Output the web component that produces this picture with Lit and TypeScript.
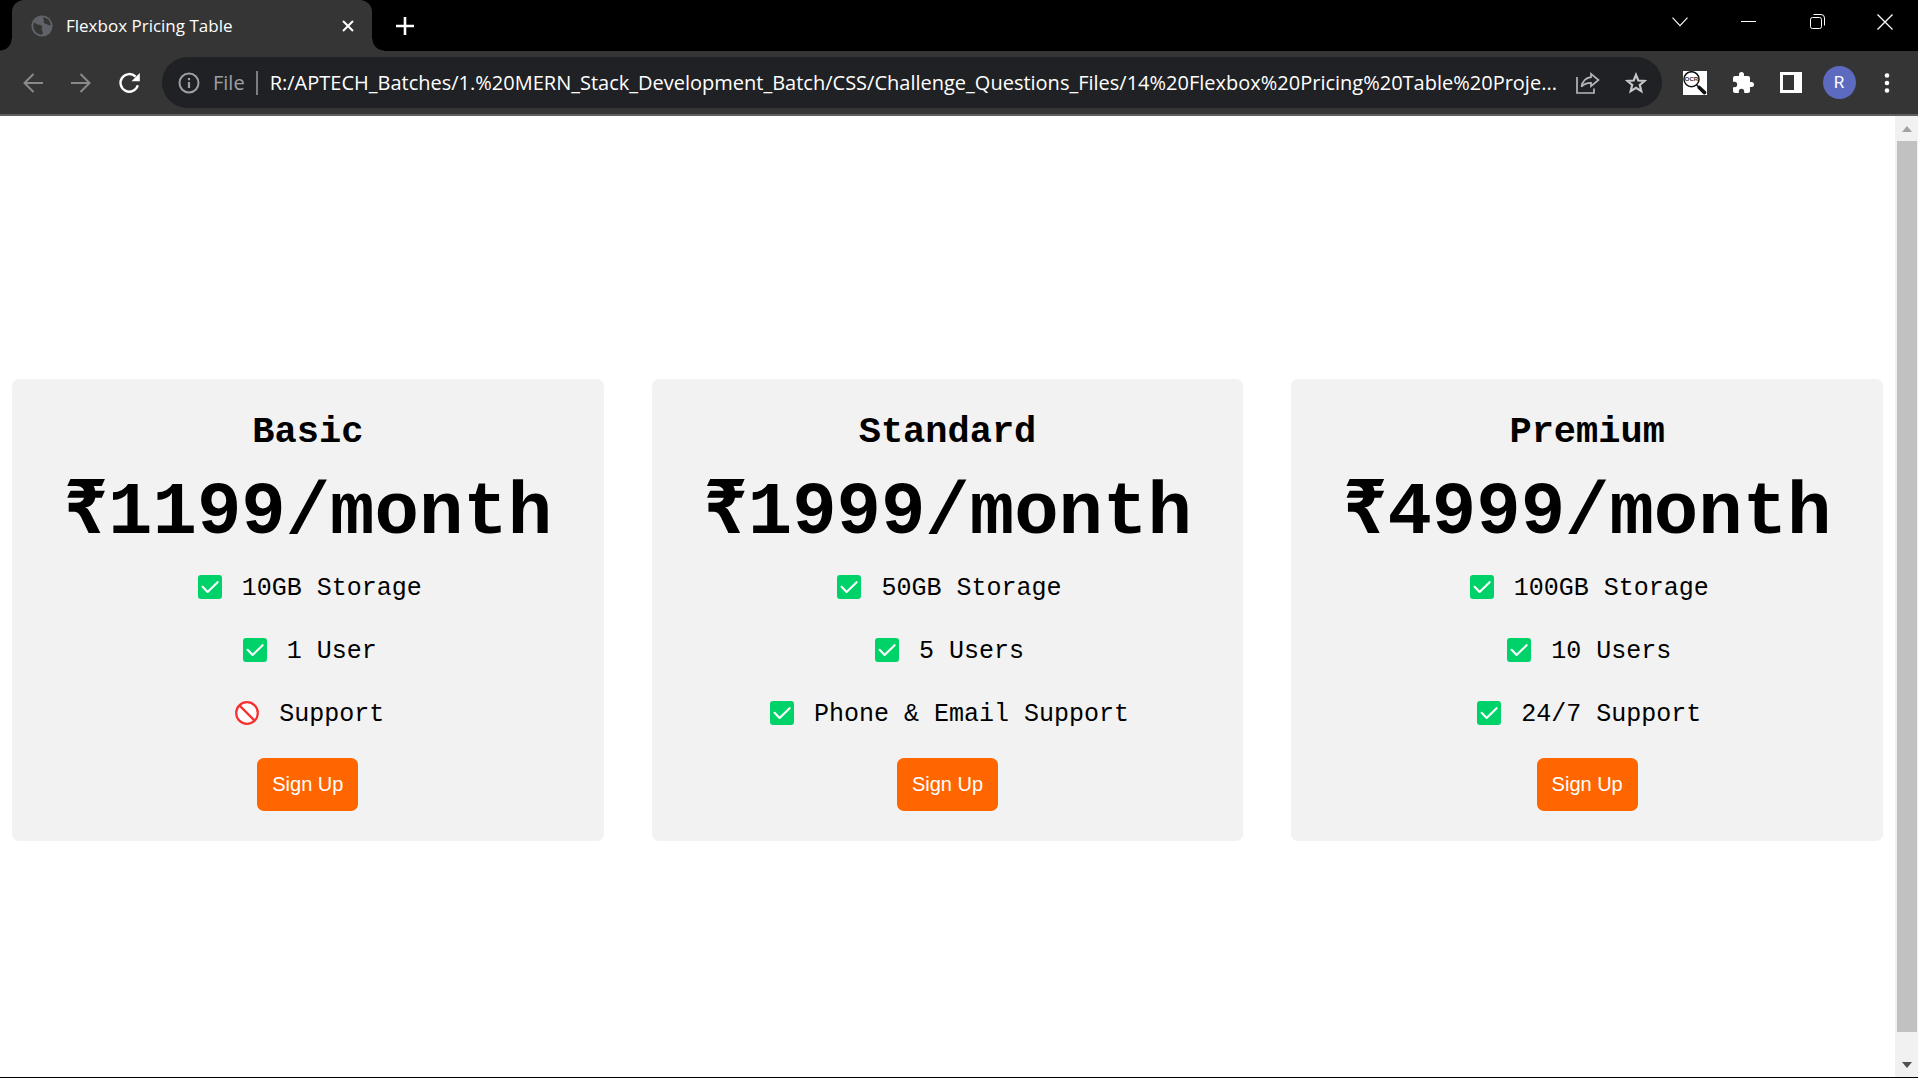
import { LitElement, html, css, svg } from "lit";
import { customElement, property } from "lit/decorators.js";

interface Feature {
  label: string;
  included: boolean;
}

interface Plan {
  name: string;
  price: string;
  features: Feature[];
}

const plans: Plan[] = [
  {
    name: "Basic",
    price: "₹1199/month",
    features: [
      { label: "10GB Storage", included: true },
      { label: "1 User", included: true },
      { label: "Support", included: false },
    ],
  },
  {
    name: "Standard",
    price: "₹1999/month",
    features: [
      { label: "50GB Storage", included: true },
      { label: "5 Users", included: true },
      { label: "Phone & Email Support", included: true },
    ],
  },
  {
    name: "Premium",
    price: "₹4999/month",
    features: [
      { label: "100GB Storage", included: true },
      { label: "10 Users", included: true },
      { label: "24/7 Support", included: true },
    ],
  },
];

const icon = (size: number, body: unknown) => html`<svg
  class="mark"
  width=${size}
  height=${size}
  viewBox="0 0 24 24"
  fill="none"
  aria-hidden="true"
>
  ${body}
</svg>`;

const checkIcon = icon(
  24,
  svg`<rect width="24" height="24" rx="3" fill="#00d26a"/>
  <path d="M4.6 11.8 9.6 17 19.6 7.2" stroke="#fff" stroke-width="2.1" stroke-linecap="round" stroke-linejoin="round"/>`,
);

const blockedIcon = icon(
  24,
  svg`<circle cx="12" cy="12" r="10.8" fill="#fff" stroke="#f8312f" stroke-width="2.2"/>
  <path d="M4.4 4.4 19.6 19.6" stroke="#f8312f" stroke-width="2.2"/>`,
);

@customElement("plan-card")
export class PlanCard extends LitElement {
  @property({ attribute: false }) plan!: Plan;

  static styles = css`
    :host {
      display: flex;
      flex: 1 1 0;
      min-width: 0;
    }
    .card {
      flex: 1;
      min-width: 0;
      display: flex;
      flex-direction: column;
      align-items: center;
      padding: 30px;
      border-radius: 7px;
      background: #f2f2f2;
      color: #000;
      font-family: "Liberation Mono", "DejaVu Sans Mono", monospace;
      box-sizing: border-box;
    }
    .name {
      margin: 0 0 12px;
      font-size: 37px;
      line-height: 46px;
      font-weight: 700;
    }
    .price {
      margin: 0 0 15px;
      font-size: 74px;
      line-height: 92px;
      font-weight: 700;
      white-space: nowrap;
    }
    .features {
      list-style: none;
      display: flex;
      flex-direction: column;
      align-items: center;
      gap: 33px;
      margin: 0 0 28px;
      padding: 0;
    }
    .feature {
      display: flex;
      align-items: center;
      gap: 20px;
      padding-left: 4px;
      font-size: 25px;
      line-height: 30px;
    }
    .mark {
      display: block;
      flex: none;
      margin-bottom: 4px;
    }
    .signup {
      height: 53px;
      padding: 0 15px;
      border: 0;
      border-radius: 7px;
      background: #ff6600;
      color: #fff;
      font-family: "Liberation Sans", Arial, sans-serif;
      font-size: 20px;
      cursor: pointer;
    }
  `;

  render() {
    return html`<article class="card">
      <h2 class="name">${this.plan.name}</h2>
      <p class="price">${this.plan.price}</p>
      <ul class="features">
        ${this.plan.features.map(
          (f) =>
            html`<li class="feature">${f.included ? checkIcon : blockedIcon}<span>${f.label}</span></li>`,
        )}
      </ul>
      <button class="signup" type="button">Sign Up</button>
    </article>`;
  }
}

@customElement("browser-chrome")
export class BrowserChrome extends LitElement {
  static styles = css`
    :host {
      display: block;
      font-family: "Open Sans", "Noto Sans", sans-serif;
    }
    button {
      display: flex;
      align-items: center;
      justify-content: center;
      padding: 0;
      border: 0;
      background: none;
      color: #fff;
      cursor: pointer;
      flex: none;
    }
    svg {
      display: block;
      flex: none;
    }
    .strip {
      display: flex;
      height: 51px;
      background: #000;
      padding-left: 12px;
    }
    .tab {
      position: relative;
      display: flex;
      align-items: center;
      width: 360px;
      box-sizing: border-box;
      padding: 0 14px 0 19px;
      border-radius: 12px 12px 0 0;
      background: #353535;
      color: #fff;
    }
    .tab::before,
    .tab::after {
      content: "";
      position: absolute;
      bottom: 0;
      width: 12px;
      height: 12px;
    }
    .tab::before {
      left: -12px;
      background: radial-gradient(circle at 0 0, #000 11px, #353535 12px);
    }
    .tab::after {
      right: -12px;
      background: radial-gradient(circle at 100% 0, #000 11px, #353535 12px);
    }
    .title {
      flex: 1;
      margin-left: 13px;
      font-size: 17px;
      line-height: 24px;
    }
    .close {
      width: 20px;
      height: 20px;
    }
    .add {
      width: 40px;
      margin-left: 13px;
    }
    .window {
      display: flex;
      margin-left: auto;
      height: 43px;
    }
    .window button {
      width: 69px;
    }
    .window .exit {
      width: 66px;
    }
    .toolbar {
      display: flex;
      align-items: center;
      height: 63px;
      padding: 0 7px 0 9px;
      background: #353535;
      border-bottom: 2px solid #5f5f5f;
    }
    .nav {
      width: 48px;
      height: 48px;
    }
    .omnibox {
      flex: 1;
      min-width: 0;
      display: flex;
      align-items: center;
      height: 51px;
      margin-left: 9px;
      margin-right: 9px;
      padding: 0 2px 0 16px;
      border-radius: 26px;
      background: #202124;
      box-sizing: border-box;
    }
    .scheme {
      margin-left: 13px;
      color: #9aa0a6;
      font-size: 20px;
      line-height: 28px;
    }
    .divider {
      width: 2px;
      height: 24px;
      margin: 0 12px 0 11px;
      background: #7b7e82;
      flex: none;
    }
    .url {
      flex: 1;
      min-width: 0;
      height: 32px;
      padding: 0;
      border: 0;
      outline: 0;
      background: none;
      color: #fff;
      font-family: inherit;
      font-size: 20px;
    }
    .tool {
      width: 48px;
      height: 48px;
    }
    .avatar {
      width: 33px;
      height: 33px;
      border-radius: 50%;
      background: #5c6bc0;
      font-family: Roboto, sans-serif;
      font-size: 17px;
      line-height: 33px;
    }
    .ocr {
      font-family: "Liberation Sans", sans-serif;
      font-size: 6px;
      font-weight: 700;
    }
  `;

  render() {
    return html`
      <div class="strip">
        <div class="tab">
          <svg width="22" height="22" viewBox="0 0 22 22" aria-hidden="true">
            <circle cx="11" cy="11" r="10.6" fill="#5f6368" />
            <path
              d="M3 7.4C4.600 7.600 5.200 9 6.800 9.600c1.600.6 3.400.4 4.200 1.700.7 1.200-.6 2.200-.4 3.500.2 1.100 1.500 1.500 1.300 2.900-.1.900-.7 1.500-1.300 2A8.900 8.900 0 0 1 3 7.400Z"
              fill="#353535"
            />
            <path
              d="M12.600 2.300A8.900 8.900 0 0 1 19.700 10c-1.300.5-2.300.1-3.200-.6-1.100-.9-2.700-.5-3.500-1.400-.7-.9.200-1.800-.2-2.800-.3-.9-1-1.700-.2-2.900Z"
              fill="#353535"
            />
          </svg>
          <span class="title">Flexbox Pricing Table</span>
          <button class="close" type="button" aria-label="Close tab">
            <svg width="12" height="12" viewBox="0 0 12 12" aria-hidden="true">
              <path d="M1 1 11 11M11 1 1 11" stroke="#fff" stroke-width="2" />
            </svg>
          </button>
        </div>
        <button class="add" type="button" aria-label="New tab">
          <svg width="18" height="18" viewBox="0 0 18 18" aria-hidden="true">
            <path d="M9 0V18M0 9H18" stroke="#fff" stroke-width="2.6" />
          </svg>
        </button>
        <div class="window">
          <button type="button" aria-label="Search tabs">
            <svg width="16" height="10" viewBox="0 0 16 10" fill="none" aria-hidden="true">
              <path d="M.5.7 8 8.7 15.5.7" stroke="#fff" stroke-width="1.1" />
            </svg>
          </button>
          <button type="button" aria-label="Minimize">
            <svg width="15" height="1" viewBox="0 0 15 1" aria-hidden="true">
              <path d="M0 .5H15" stroke="#fff" />
            </svg>
          </button>
          <button type="button" aria-label="Restore">
            <svg width="15" height="15" viewBox="0 0 15 15" fill="none" stroke="#fff" aria-hidden="true">
              <rect x=".5" y="3.5" width="11" height="11" rx="2" />
              <path d="M3.500.5H11Q14.500.5 14.500 4V11.500" />
            </svg>
          </button>
          <button class="exit" type="button" aria-label="Close window">
            <svg width="16" height="16" viewBox="0 0 16 16" aria-hidden="true">
              <path d="M.5.5 15.5 15.5M15.5.5.5 15.5" stroke="#fff" stroke-width="1.3" />
            </svg>
          </button>
        </div>
      </div>
      <div class="toolbar">
        <button class="nav" type="button" aria-label="Back">
          <svg width="20" height="20" viewBox="0 0 20 20" fill="none" stroke="#8a8a8a" stroke-width="2" aria-hidden="true">
            <path d="M20 10H1.5M10.5 1 1.5 10 10.5 19" />
          </svg>
        </button>
        <button class="nav" type="button" aria-label="Forward">
          <svg width="20" height="20" viewBox="0 0 20 20" fill="none" stroke="#8a8a8a" stroke-width="2" aria-hidden="true">
            <path d="M0 10H18.5M9.5 1 18.5 10 9.5 19" />
          </svg>
        </button>
        <button class="nav" type="button" aria-label="Reload">
          <svg width="22" height="22" viewBox="0 0 22 22" fill="none" aria-hidden="true">
            <path d="M19.8 13.2A8.8 8.8 0 1 1 17.6 4.7" stroke="#fff" stroke-width="2.4" />
            <path d="M21.8 1V9.2H13.5Z" fill="#fff" />
          </svg>
        </button>
        <div class="omnibox">
          <svg width="22" height="22" viewBox="0 0 22 22" fill="none" aria-hidden="true">
            <circle cx="11" cy="11" r="9.5" stroke="#9aa0a6" stroke-width="2" />
            <path d="M11 10V16M11 6V8.2" stroke="#9aa0a6" stroke-width="2.2" />
          </svg>
          <label class="scheme" for="address">File</label>
          <span class="divider"></span>
          <input
            id="address"
            class="url"
            type="text"
            spellcheck="false"
            value="R:/APTECH_Batches/1.%20MERN_Stack_Development_Batch/CSS/Challenge_Questions_Files/14%20Flexbox%20Pricing%20Table%20Proje..."
          />
          <button class="tool" type="button" aria-label="Share">
            <svg width="24" height="22" viewBox="0 0 24 22" fill="none" stroke="#b4b6b9" stroke-width="1.7" aria-hidden="true">
              <path d="M1 5V21H18V16.5" />
              <path d="M15 1.8 22.5 8 15 14.2V10.8C10.500 10.8 8 11.600 5.500 14.8 6.300 9.8 9.400 6 15 5.200Z" />
            </svg>
          </button>
          <button class="tool" type="button" aria-label="Bookmark">
            <svg width="22" height="22" viewBox="0 0 22 22" fill="none" aria-hidden="true">
              <path d="M11 2.800 13.300 8.500 19.500 9 14.800 13 16.300 19.100 11 15.800 5.700 19.100 7.200 13 2.500 9 8.700 8.500Z" stroke="#c4c6c8" stroke-width="2.200" />
            </svg>
          </button>
        </div>
        <button class="tool" type="button" aria-label="Image reader">
          <svg width="24" height="24" viewBox="0 0 24 24" fill="none" aria-hidden="true">
            <rect width="24" height="24" fill="#fff" />
            <path d="M13.500 14 17 17" stroke="#111" stroke-width="1.500" />
            <path d="M16.200 16.500 21.500 21.600" stroke="#111" stroke-width="3.600" stroke-linecap="round" />
            <circle cx="8.500" cy="8.200" r="7.500" fill="#fff" stroke="#111" stroke-width="1.500" />
            <text class="ocr" x="8.500" y="10.400" text-anchor="middle" fill="#333">OCR</text>
          </svg>
        </button>
        <button class="tool" type="button" aria-label="Extensions">
          <svg width="24" height="24" viewBox="0 0 24 24" aria-hidden="true">
            <path
              d="M20.500 11H19V7c0-1.100-.9-2-2-2h-4V3.500a2.500 2.500 0 0 0-5 0V5H4c-1.100 0-2 .9-2 2v3.800h1.500a2.700 2.700 0 0 1 0 5.400H2V20c0 1.100.9 2 2 2h3.800v-1.500a2.700 2.700 0 0 1 5.400 0V22H17c1.100 0 2-.9 2-2v-4h1.500a2.500 2.500 0 0 0 0-5Z"
              fill="#fff"
            />
          </svg>
        </button>
        <button class="tool" type="button" aria-label="Side panel">
          <svg width="22" height="22" viewBox="0 0 22 22" aria-hidden="true">
            <path d="M0 0H22V21H0ZM3 3V18H14V3Z" fill="#fff" fill-rule="evenodd" />
          </svg>
        </button>
        <button class="tool" type="button" aria-label="Profile">
          <span class="avatar">R</span>
        </button>
        <button class="tool" type="button" aria-label="Menu">
          <svg width="6" height="20" viewBox="0 0 6 20" aria-hidden="true">
            <circle cx="3" cy="2.500" r="2.300" fill="#fff" />
            <circle cx="3" cy="10" r="2.300" fill="#fff" />
            <circle cx="3" cy="17.500" r="2.300" fill="#fff" />
          </svg>
        </button>
      </div>
    `;
  }
}

@customElement("app-root")
export class AppRoot extends LitElement {
  static styles = css`
    :host {
      display: flex;
      flex-direction: column;
      min-height: 100vh;
      box-sizing: border-box;
      border-bottom: 1px solid #000;
      background: #fff;
    }
    .viewport {
      flex: 1;
      display: flex;
    }
    .plans {
      flex: 1;
      min-width: 0;
      display: flex;
      align-items: center;
      gap: 48px;
      padding: 27px 12px 0;
    }
    .scrollbar {
      display: flex;
      flex-direction: column;
      width: 23px;
      background: #f1f1f1;
    }
    .arrow {
      display: flex;
      align-items: center;
      justify-content: center;
      height: 25px;
      padding: 0;
      border: 0;
      background: none;
    }
    .track {
      flex: 1;
      display: flex;
      flex-direction: column;
      padding: 0 1px 20px 2px;
    }
    .thumb {
      flex: 1;
      background: #c1c1c1;
    }
  `;

  render() {
    return html`
      <browser-chrome></browser-chrome>
      <div class="viewport">
        <main class="plans">${plans.map((p) => html`<plan-card .plan=${p}></plan-card>`)}</main>
        <div class="scrollbar">
          <button class="arrow" type="button" aria-label="Scroll up">
            <svg width="10" height="6" viewBox="0 0 10 6" aria-hidden="true"><path d="M0 6 5 0 10 6Z" fill="#a3a3a3" /></svg>
          </button>
          <div class="track"><div class="thumb"></div></div>
          <button class="arrow" type="button" aria-label="Scroll down">
            <svg width="10" height="6" viewBox="0 0 10 6" aria-hidden="true"><path d="M0 0 5 6 10 0Z" fill="#505050" /></svg>
          </button>
        </div>
      </div>
    `;
  }
}
